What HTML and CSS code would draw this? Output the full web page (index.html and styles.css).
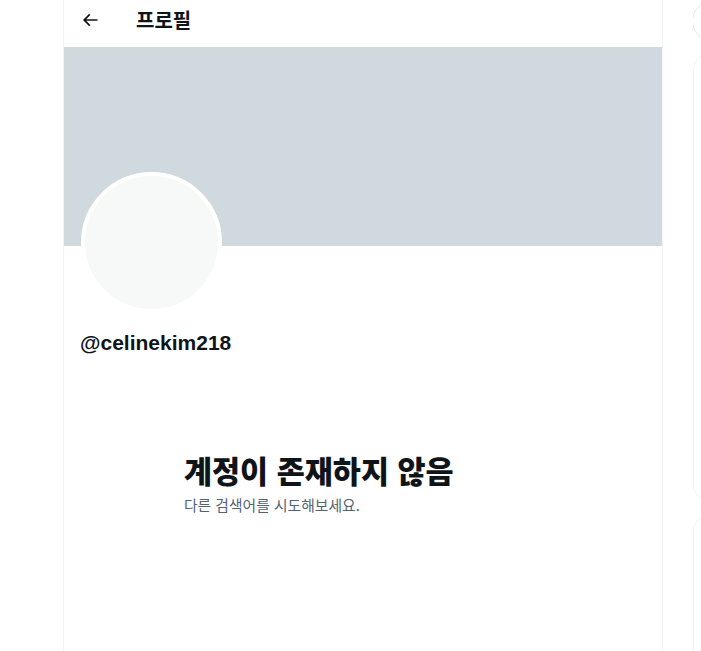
FILE: index.html
```html
<!DOCTYPE html>
<html lang="ko">
<head>
<meta charset="utf-8">
<link rel="stylesheet" href="styles.css">
</head>
<body>
<div class="layout">
  <main class="primary">
    <header class="topbar">
      <span class="back">
        <svg viewBox="0 0 24 24" width="20" height="20"><path d="M7.414 13l5.043 5.04-1.414 1.42L3.586 12l7.457-7.46 1.414 1.42L7.414 11H21v2H7.414z"/></svg>
      </span>
      <h1 class="title">프로필</h1>
    </header>
    <div class="banner"></div>
    <div class="profile">
      <div class="avatar"></div>
      <div class="handle">@celinekim218</div>
    </div>
    <div class="empty">
      <div class="empty-title">계정이 존재하지 않음</div>
      <div class="empty-sub">다른 검색어를 시도해보세요.</div>
    </div>
  </main>
  <aside class="sidebar">
    <div class="sidebar-inner">
      <div class="search"></div>
      <div class="card card-one"></div>
      <div class="card card-two"></div>
    </div>
  </aside>
</div>
</body>
</html>
```

FILE: styles.css
```css
html, body {
  margin: 0;
  padding: 0;
  background: #ffffff;
  overflow: hidden;
}
body {
  font-family: "Liberation Sans", "Noto Sans CJK KR", sans-serif;
  color: #0f1419;
  height: 651px;
}
.layout {
  display: flex;
  gap: 30px;
  padding-left: 63px;
  height: 651px;
  overflow: hidden;
}
.primary {
  width: 600px;
  flex: none;
  box-sizing: border-box;
  border-left: 1px solid #eff3f4;
  border-right: 1px solid #eff3f4;
  height: 651px;
}
.topbar {
  height: 47px;
  display: flex;
  align-items: center;
  padding-left: 16px;
  box-sizing: border-box;
  padding-bottom: 7px;
}
.back {
  width: 56px;
  display: flex;
  align-items: center;
}
.back svg {
  fill: #0f1419;
  display: block;
}
.title {
  margin: 0;
  font-family: "Noto Sans CJK KR", sans-serif;
  font-size: 20px;
  font-weight: 700;
  line-height: 24px;
}
.banner {
  height: 199px;
  background: #cfd9de;
}
.profile {
  padding: 0 16px 0 17px;
}
.avatar {
  width: 133px;
  height: 133px;
  border-radius: 50%;
  background: #f7f9f9;
  border: 4px solid #ffffff;
  margin-top: -74px;
}
.handle {
  margin-top: 18px;
  margin-left: -1px;
  font-size: 21px;
  font-weight: 700;
  line-height: 24px;
  color: #0f1419;
}
.empty {
  margin-top: 97px;
  padding-left: 120px;
}
.empty-title {
  font-family: "Noto Sans CJK KR", sans-serif;
  font-size: 30.5px;
  font-weight: 900;
  line-height: 36px;
}
.empty-sub {
  margin-top: 7px;
  font-family: "Noto Sans CJK KR", sans-serif;
  font-size: 14.8px;
  line-height: 20px;
  color: #536471;
}
.sidebar {
  flex: 1;
  min-width: 0;
  overflow: hidden;
}
.sidebar-inner {
  width: 350px;
  display: flex;
  flex-direction: column;
}
.search {
  flex: none;
  height: 38px;
  margin-top: 1px;
  border: 1px solid #e1e8ed;
  border-radius: 9999px;
  margin-left: -1px;
}
.card {
  flex: none;
  border: 1px solid #eff3f4;
  border-radius: 16px;
}
.card-one {
  margin-top: 12px;
  height: 446px;
}
.card-two {
  margin-top: 14px;
  height: 300px;
}
```
